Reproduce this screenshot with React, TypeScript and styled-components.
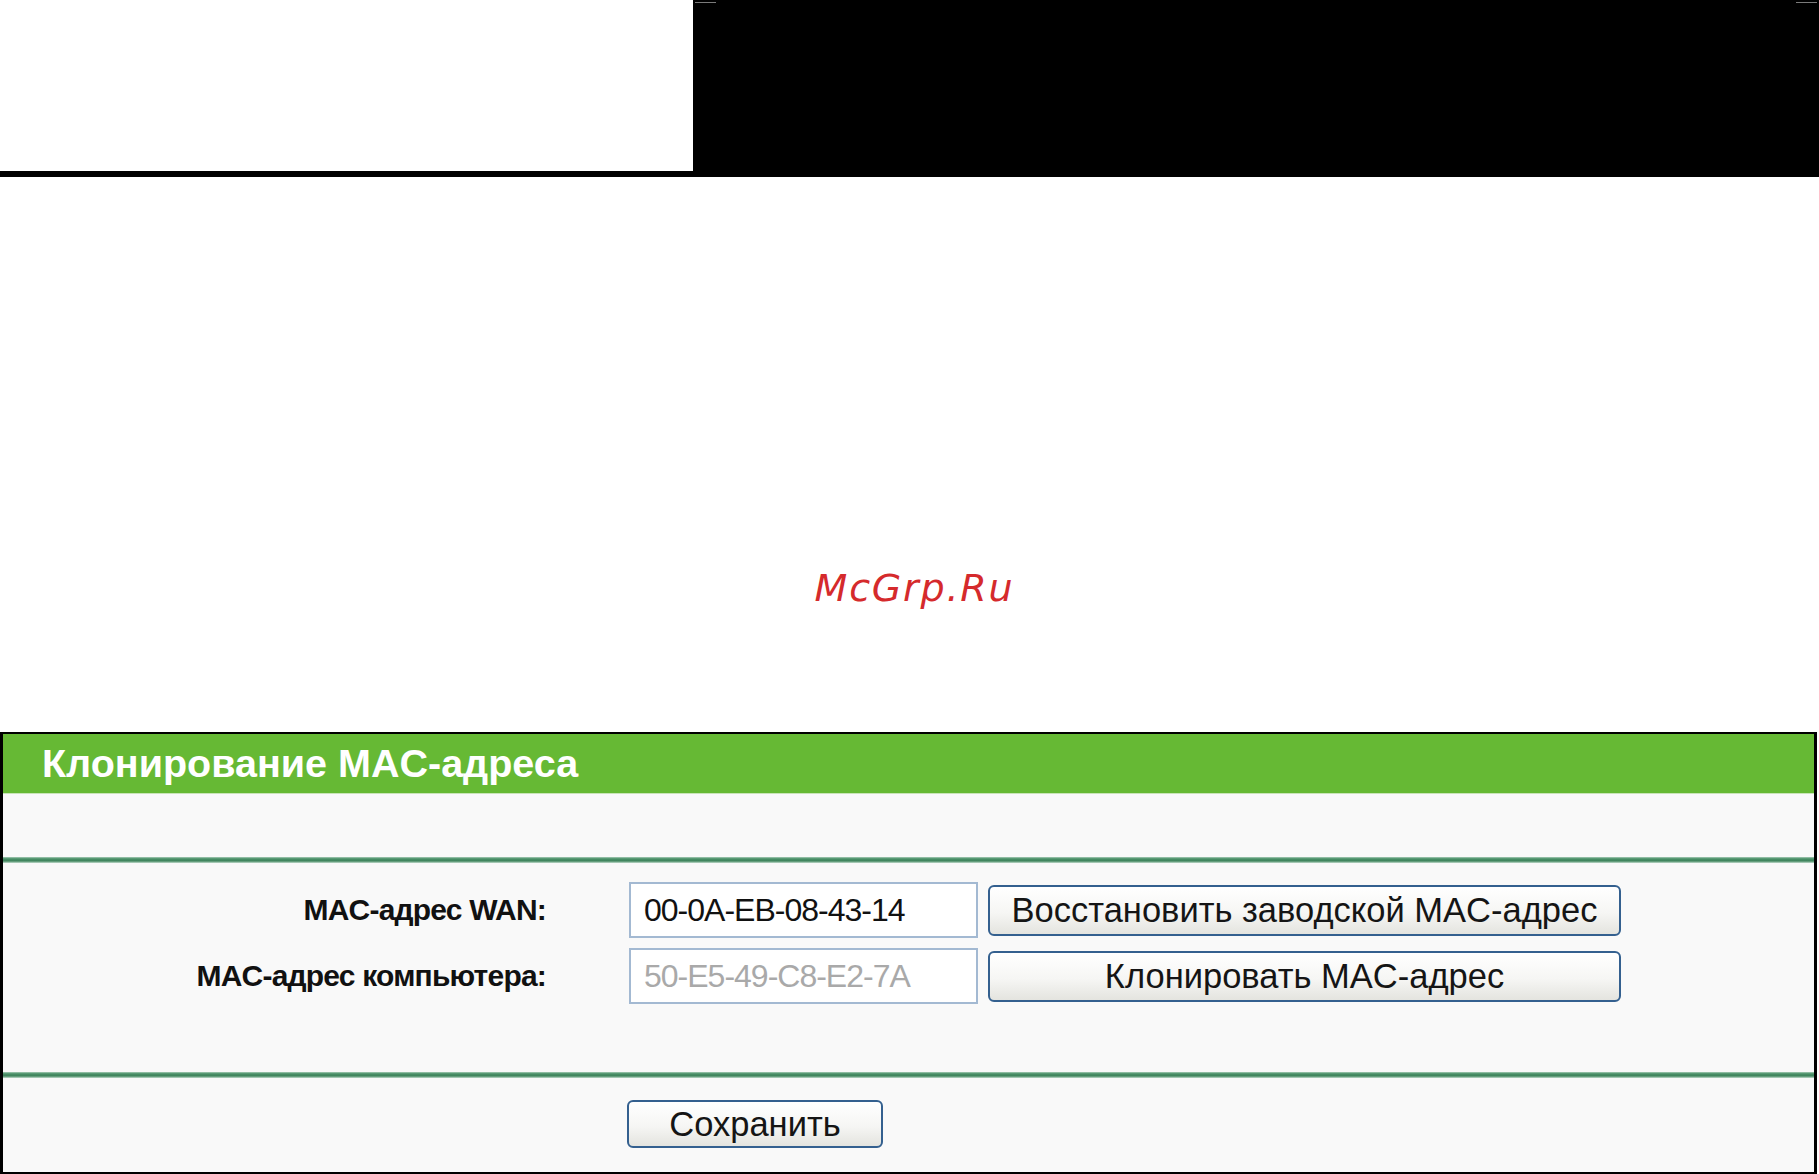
import React from 'react';
import styled, { createGlobalStyle } from 'styled-components';

const GlobalStyle = createGlobalStyle`
  html, body {
    margin: 0;
    padding: 0;
    background: #ffffff;
  }
  body {
    width: 1819px;
    height: 1174px;
    overflow: hidden;
    font-family: "Liberation Sans", Arial, sans-serif;
  }
`;

const Page = styled.div`
  display: flex;
  flex-direction: column;
  width: 1819px;
  height: 1174px;
`;

const TopBar = styled.div`
  position: relative;
  display: flex;
  height: 177px;
  background: #000000;
`;

const TopBlank = styled.div`
  width: 693px;
  height: 171px;
  background: #ffffff;
`;

const Tick = styled.span<{ $left: number }>`
  position: absolute;
  top: 2px;
  left: ${({ $left }) => $left}px;
  width: 21px;
  height: 1px;
  background: #7a7a7a;
`;

const Gap = styled.div`
  height: 555px;
  box-sizing: border-box;
  padding: 389px 0 0 10px;
  text-align: center;
`;

const Watermark = styled.span`
  font-family: "DejaVu Sans", sans-serif;
  font-style: oblique;
  font-size: 38px;
  letter-spacing: 1.8px;
  color: #d52a2c;
`;

const Panel = styled.div`
  display: flex;
  flex-direction: column;
  width: 1817px;
  height: 442px;
  box-sizing: border-box;
  border: 3px solid #000000;
  border-top-width: 2px;
  border-bottom-width: 2px;
  background: #f9f9f9;
`;

const Header = styled.div`
  display: flex;
  align-items: center;
  height: 59px;
  padding-left: 39px;
  background: #66b934;
  border-bottom: 1px solid #c9e5b9;
`;

const Title = styled.h1`
  margin: 0;
  font-size: 39.5px;
  font-weight: bold;
  color: #ffffff;
`;

const Intro = styled.div`
  height: 63px;
`;

const Rule = styled.div`
  height: 6px;
  background: linear-gradient(
    to bottom,
    #a9cdb8 0%,
    #4a9068 30%,
    #3f845c 65%,
    #c2dccd 100%
  );
`;

const Fields = styled.div`
  display: grid;
  grid-template-columns: 543px 349px 633px;
  column-gap: 83px;
  row-gap: 10px;
  align-items: center;
  height: 209px;
  box-sizing: border-box;
  padding-top: 19px;
  align-content: start;
`;

const Label = styled.label`
  text-align: right;
  font-size: 30px;
  font-weight: bold;
  letter-spacing: -0.8px;
  color: #111111;
`;

const Field = styled.input<{ $muted?: boolean }>`
  width: 349px;
  height: 56px;
  box-sizing: border-box;
  padding: 0 0 0 13px;
  border: 2px solid #a3b9d2;
  background: #ffffff;
  font-family: "Liberation Sans", Arial, sans-serif;
  font-size: 32px;
  letter-spacing: -1px;
  color: ${({ $muted }) => ($muted ? '#a9a9a9' : '#111111')};
  outline: none;
`;

const Controls = styled.div`
  display: flex;
  margin-left: -73px;
`;

const Button = styled.button<{ $width: number }>`
  width: ${({ $width }) => $width}px;
  height: 51px;
  box-sizing: border-box;
  border: 2px solid #34608f;
  border-radius: 6px;
  background: linear-gradient(to bottom, #ffffff 0%, #f6f6f4 55%, #e4e4df 100%);
  font-family: "Liberation Sans", Arial, sans-serif;
  font-size: 34.5px;
  color: #151515;
  padding: 0;
  cursor: pointer;
`;

const Footer = styled.div`
  display: flex;
  padding: 22px 0 0 624px;
`;

const SaveButton = styled(Button)`
  height: 48px;
`;

export default function App() {
  return (
    <>
      <GlobalStyle />
      <Page>
        <TopBar>
          <TopBlank />
          <Tick $left={695} />
          <Tick $left={1796} />
        </TopBar>
        <Gap>
          <Watermark>McGrp.Ru</Watermark>
        </Gap>
        <Panel>
          <Header>
            <Title>Клонирование MAC-адреса</Title>
          </Header>
          <Intro />
          <Rule />
          <Fields>
            <Label>MAC-адрес WAN:</Label>
            <Field defaultValue="00-0A-EB-08-43-14" />
            <Controls>
              <Button $width={633}>Восстановить заводской MAC-адрес</Button>
            </Controls>
            <Label>MAC-адрес компьютера:</Label>
            <Field $muted readOnly defaultValue="50-E5-49-C8-E2-7A" />
            <Controls>
              <Button $width={633}>Клонировать MAC-адрес</Button>
            </Controls>
          </Fields>
          <Rule />
          <Footer>
            <SaveButton $width={256}>Сохранить</SaveButton>
          </Footer>
        </Panel>
      </Page>
    </>
  );
}
